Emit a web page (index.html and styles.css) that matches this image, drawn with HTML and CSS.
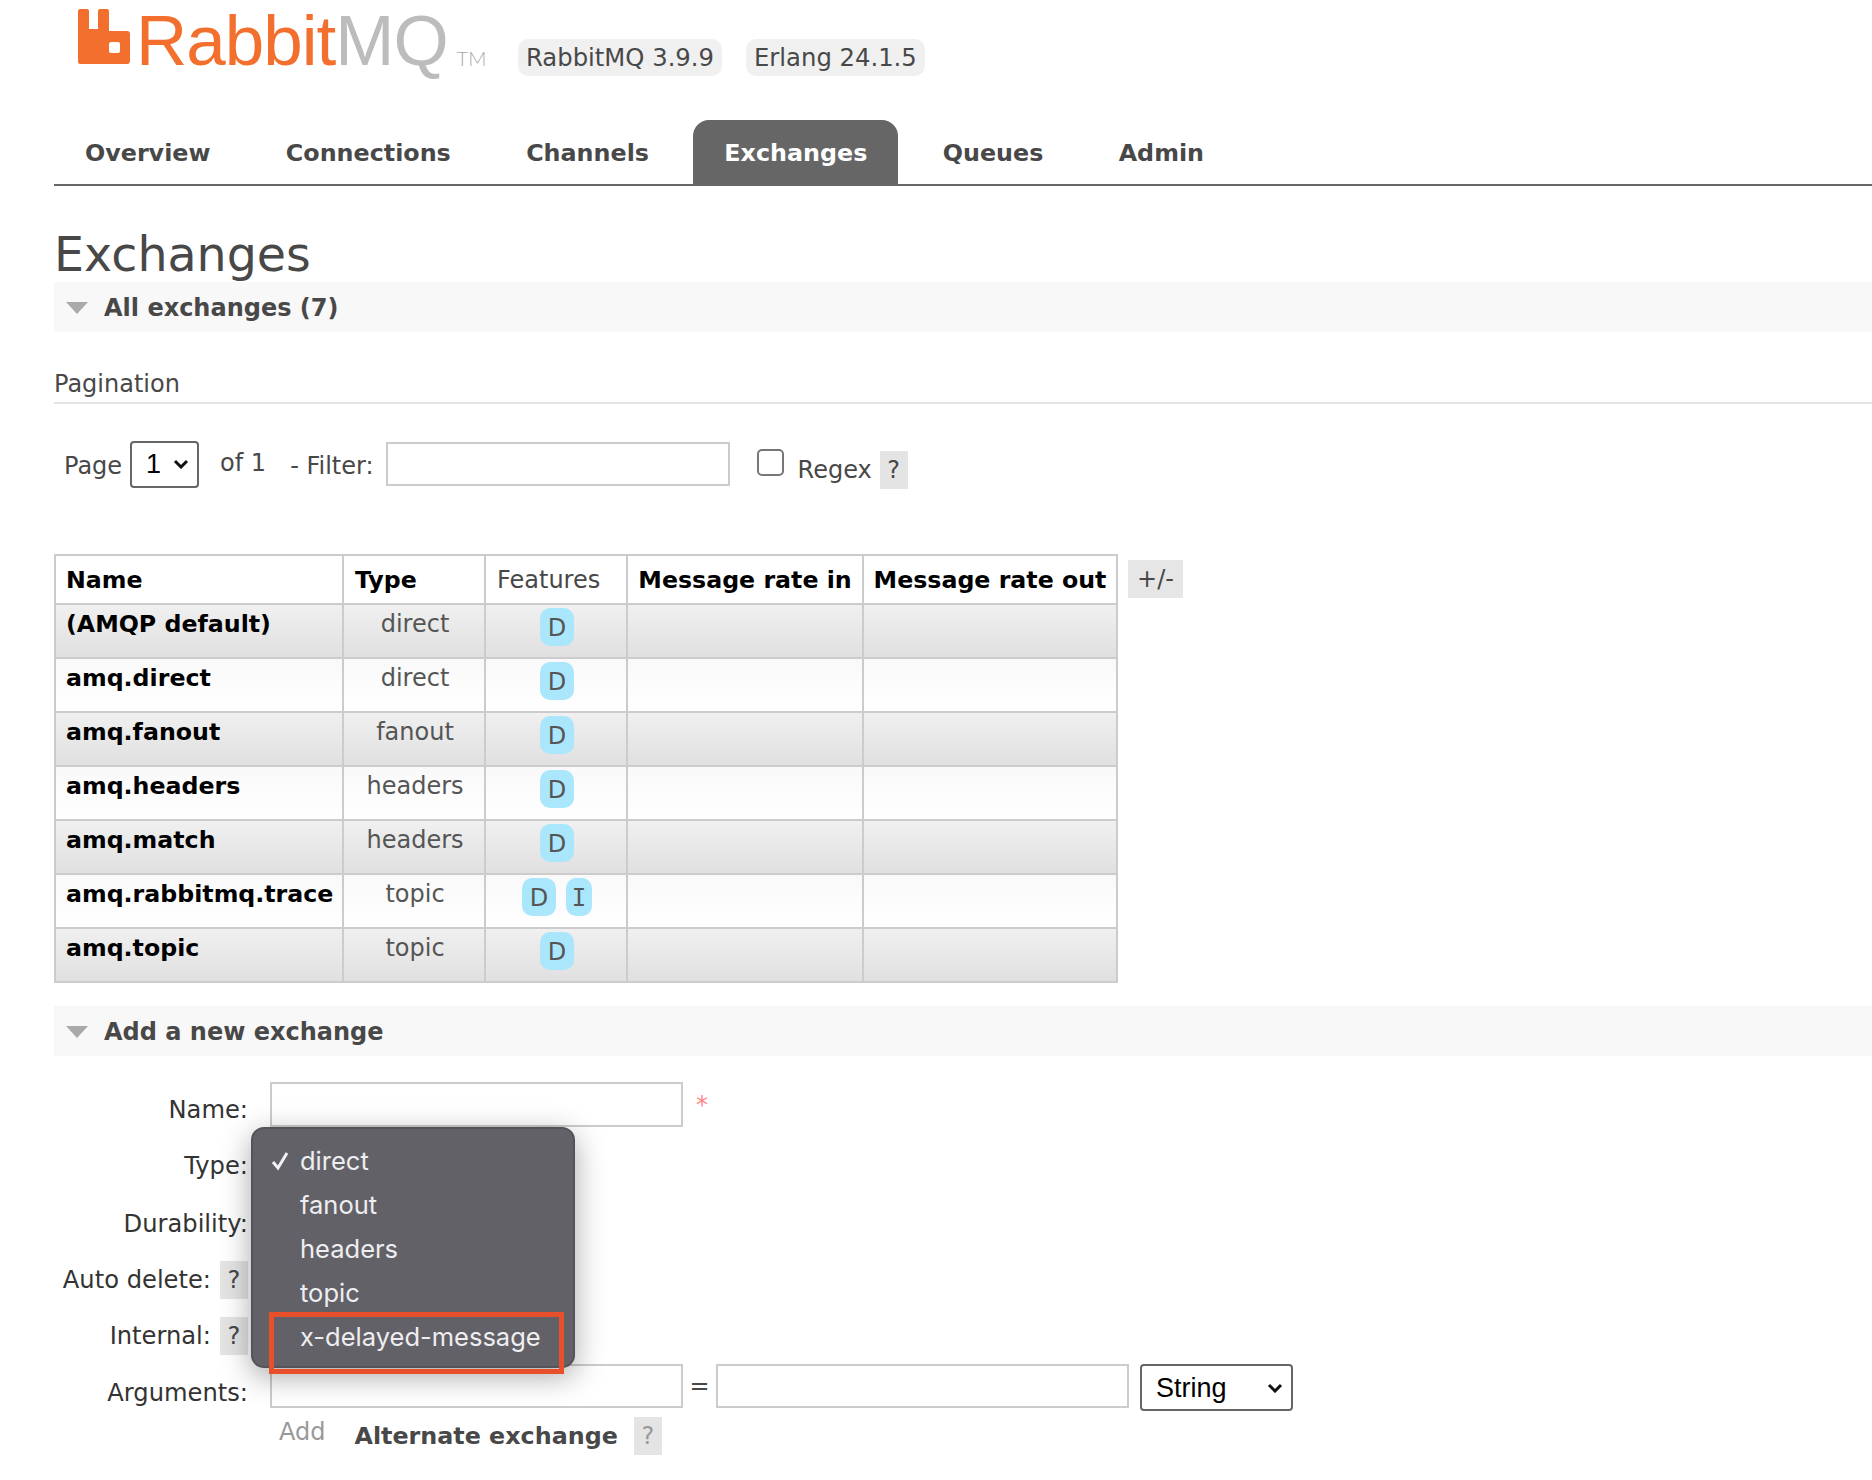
FILE: index.html
```html
<!DOCTYPE html>
<html lang="en">
<head>
    <meta charset="UTF-8">
    <title>RabbitMQ Management</title>
    <link rel="stylesheet" href="styles.css">
</head>
<body>
    <div class="page">
        <div class="header">
            <div class="logo">
                <svg class="logo-icon" width="52" height="55" viewBox="0 0 52 55">
                    <path fill="#f26f2e" fill-rule="evenodd" d="M2 0h7a2 2 0 0 1 2 2v18h9V2a2 2 0 0 1 2-2h7a2 2 0 0 1 2 2v20h18a3 3 0 0 1 3 3v27a3 3 0 0 1-3 3H2a2 2 0 0 1-2-2V2a2 2 0 0 1 2-2zM33 33a2 2 0 0 0-2 2v7a2 2 0 0 0 2 2h7a2 2 0 0 0 2-2v-7a2 2 0 0 0-2-2z"/>
                </svg>
                <span class="logo-text"><span class="logo-rabbit">Rabbit</span>MQ</span>
                <span class="logo-tm">TM</span>
            </div>
            <span class="version">RabbitMQ 3.9.9</span>
            <span class="version">Erlang 24.1.5</span>
        </div>

        <ul class="nav">
            <li>Overview</li>
            <li>Connections</li>
            <li>Channels</li>
            <li class="selected">Exchanges</li>
            <li>Queues</li>
            <li>Admin</li>
        </ul>

        <h1>Exchanges</h1>
        <h2 class="section-title"><span class="arrow"></span>All exchanges (7)</h2>

        <h3 class="sub-title">Pagination</h3>
        <div class="pagination">
            <span class="page-label">Page</span>
            <select class="page-select"><option>1</option></select>
            <span class="of-label">of 1</span>
            <span class="filter-label">- Filter:</span>
            <input type="text" class="filter-input">
            <input type="checkbox" class="regex-check">
            <span class="regex-label">Regex</span>
            <span class="help regex-help">?</span>
        </div>

        <div class="table-wrap">
            <table class="list">
                <thead>
                    <tr>
                        <th class="col-name">Name</th>
                        <th class="col-type">Type</th>
                        <th class="col-features plain">Features</th>
                        <th class="col-in center">Message rate in</th>
                        <th class="col-out center">Message rate out</th>
                    </tr>
                </thead>
                <tbody>
                    <tr class="alt1"><td class="name">(AMQP default)</td><td class="type">direct</td><td class="features"><span class="pill">D</span></td><td></td><td></td></tr>
                    <tr class="alt2"><td class="name">amq.direct</td><td class="type">direct</td><td class="features"><span class="pill">D</span></td><td></td><td></td></tr>
                    <tr class="alt1"><td class="name">amq.fanout</td><td class="type">fanout</td><td class="features"><span class="pill">D</span></td><td></td><td></td></tr>
                    <tr class="alt2"><td class="name">amq.headers</td><td class="type">headers</td><td class="features"><span class="pill">D</span></td><td></td><td></td></tr>
                    <tr class="alt1"><td class="name">amq.match</td><td class="type">headers</td><td class="features"><span class="pill">D</span></td><td></td><td></td></tr>
                    <tr class="alt2"><td class="name">amq.rabbitmq.trace</td><td class="type">topic</td><td class="features"><span class="pill">D</span><span class="pill pill-i">I</span></td><td></td><td></td></tr>
                    <tr class="alt1"><td class="name">amq.topic</td><td class="type">topic</td><td class="features"><span class="pill">D</span></td><td></td><td></td></tr>
                </tbody>
            </table>
            <span class="plus-minus">+/-</span>
        </div>

        <h2 class="section-title add-title"><span class="arrow"></span>Add a new exchange</h2>

        <div class="add-form">
            <div class="form-row row-name">
                <label class="form-label">Name:</label>
                <input type="text" class="form-input">
                <span class="required">*</span>
            </div>
            <div class="form-row row-type">
                <label class="form-label">Type:</label>
            </div>
            <div class="form-row row-durability">
                <label class="form-label">Durability:</label>
            </div>
            <div class="form-row row-auto">
                <label class="form-label">Auto delete:<span class="help">?</span></label>
            </div>
            <div class="form-row row-internal">
                <label class="form-label">Internal:<span class="help">?</span></label>
            </div>
            <div class="form-row row-args">
                <label class="form-label">Arguments:</label>
                <input type="text" class="form-input">
                <span class="equals">=</span>
                <input type="text" class="form-input">
                <select class="arg-type"><option>String</option></select>
            </div>
            <div class="form-row row-add">
                <span class="add-link">Add</span>
                <span class="alternate">Alternate exchange</span>
                <span class="help help-dim">?</span>
            </div>

            <div class="type-menu">
                <div class="menu-item">
                    <svg class="menu-check" width="18" height="20" viewBox="0 0 18 20"><path d="M2 11l5 6L16 2" fill="none" stroke="#f2f2f4" stroke-width="3"/></svg>
                    direct
                </div>
                <div class="menu-item">fanout</div>
                <div class="menu-item">headers</div>
                <div class="menu-item">topic</div>
                <div class="menu-item">x-delayed-message</div>
                <div class="menu-mark"></div>
            </div>
        </div>
    </div>
</body>
</html>
```

FILE: styles.css
```css
/* Global Styles */
body {
    margin: 0;
    background: #fff;
    color: #484848;
    font-family: "DejaVu Sans", Verdana, sans-serif;
    font-size: 24px;
}

.page {
    padding-left: 54px;
    overflow: hidden;
}

/* Header */
.header {
    height: 120px;
    display: flex;
    align-items: flex-start;
}

.logo {
    width: 464px;
    height: 80px;
    padding-left: 24px;
    display: flex;
    align-items: flex-start;
    box-sizing: border-box;
}

.logo-icon {
    margin-top: 9px;
    flex-shrink: 0;
}

.logo-text {
    margin-left: 6px;
    font-family: "Liberation Sans", Arial, sans-serif;
    font-size: 71px;
    letter-spacing: -1px;
    color: #bcbcbc;
    white-space: nowrap;
}

.logo-rabbit {
    color: #f26f2e;
}

.logo-tm {
    margin: 46px 0 0 9px;
    font-family: Lato, "Open Sans", sans-serif;
    font-size: 20px;
    font-weight: 300;
    color: #aaa;
}

.version {
    margin: 39px 24px 0 0;
    padding: 0 8px;
    height: 37px;
    line-height: 37px;
    font-size: 24.3px;
    background: #f0f0f0;
    border-radius: 10px;
    white-space: nowrap;
}

/* Nav */
.nav {
    list-style: none;
    margin: 0;
    padding: 0;
    height: 64px;
    display: flex;
    gap: 13.4px;
    border-bottom: 2px solid #666;
}

.nav li {
    padding: 0 31px;
    line-height: 67px;
    font-size: 23.8px;
    font-weight: bold;
}

.nav li.selected {
    background: #666;
    color: #fff;
    border-radius: 16px 16px 0 0;
    height: 66px;
}

h1 {
    margin: 41px 0 0;
    font-size: 47.5px;
    font-weight: normal;
    line-height: 55px;
}

/* Section bars */
.section-title {
    margin: 0;
    height: 50px;
    line-height: 50px;
    background: #f8f8f8;
    font-size: 24px;
    font-weight: bold;
    display: flex;
    align-items: center;
    white-space: nowrap;
    padding-top: 1px;
    box-sizing: border-box;
}

.arrow {
    width: 0;
    height: 0;
    margin: 0 16px 0 12px;
    border-left: 11px solid transparent;
    border-right: 11px solid transparent;
    border-top: 12px solid #aaa;
}

.sub-title {
    margin: 32px 0 0;
    height: 38px;
    line-height: 40px;
    font-size: 24px;
    font-weight: normal;
    border-bottom: 2px solid #e4e4e4;
}

/* Pagination */
.pagination {
    margin: 36px 0 0 10px;
    height: 48px;
    display: flex;
    align-items: center;
    line-height: 30px;
}

select {
    appearance: none;
    font-family: "Liberation Sans", Arial, sans-serif;
    color: #000;
    background-color: #fff;
    background-image: url("data:image/svg+xml,%3Csvg xmlns='http://www.w3.org/2000/svg' width='16' height='10' viewBox='0 0 16 10'%3E%3Cpath d='M2 2l6 6 6-6' fill='none' stroke='%23111' stroke-width='3'/%3E%3C/svg%3E");
    background-repeat: no-repeat;
    background-position: right 8px center;
    border: 2px solid #666;
    border-radius: 4px;
}

.page-select {
    margin-left: 8px;
    width: 69px;
    height: 47px;
    font-size: 27px;
    padding-left: 14px;
}

.page-label {
    margin-top: 4px;
}

.of-label {
    margin: -2px 0 0 21px;
}

.filter-label {
    margin: 4px 0 0 24px;
}

input {
    box-sizing: border-box;
    border: 2px solid #ccc;
    background: #fff;
    border-radius: 0;
    margin: 0;
}

.filter-input {
    margin-left: 12px;
    width: 344px;
    height: 44px;
}

.regex-check {
    appearance: none;
    margin: -4px 0 0 27px;
    width: 27px;
    height: 27px;
    border: 2px solid #777;
    border-radius: 5px;
}

.regex-label {
    margin: 12px 0 0 14px;
}

.help {
    display: inline-block;
    width: 28px;
    height: 38px;
    line-height: 38px;
    text-align: center;
    background: #e4e4e4;
    color: #484848;
}

.regex-help {
    margin: 12px 0 0 8px;
}

/* Exchange table */
.table-wrap {
    margin-top: 66px;
    display: flex;
    align-items: flex-start;
}

.list {
    border-collapse: collapse;
    table-layout: fixed;
    width: 1062px;
}

.list th,
.list td {
    border: 2px solid #ccc;
    padding: 0;
    box-sizing: border-box;
}

.list th {
    height: 49px;
    padding: 0 0 0 10px;
    font-size: 23.7px;
    color: #000;
    text-align: left;
    white-space: nowrap;
}

.list th.col-type {
    padding-left: 11px;
}

.list th.plain {
    padding-left: 11px;
    font-weight: normal;
    font-size: 24px;
    color: #484848;
}

.list th.center {
    text-align: center;
    padding-left: 0;
}

.col-name { width: 288px; }
.col-type { width: 142px; }
.col-features { width: 142px; }
.col-in { width: 236px; }
.col-out { width: 254px; }

.list td {
    height: 54px;
    vertical-align: top;
}

.alt1 td {
    background: linear-gradient(#f0f0f0, #e0e0e0);
}

.alt2 td {
    background: linear-gradient(#f9f9f9, #fff);
}

.name {
    padding: 5px 0 0 10px !important;
    font-size: 23.7px;
    color: #000;
    font-weight: bold;
    white-space: nowrap;
}

.type {
    padding: 5px 0 0 2px !important;
    text-align: center;
    color: #555;
}

.features {
    padding: 3px 0 0 2px !important;
    text-align: center;
}

.pill {
    display: inline-block;
    width: 34px;
    height: 38px;
    line-height: 40px;
    border-radius: 10px;
    background: #abe7fc;
    color: #555;
    text-align: center;
    margin: 0;
}

.pill-i {
    margin-left: 10px;
    font-family: "DejaVu Sans Mono", monospace;
    width: 26px;
}

.plus-minus {
    margin: 6px 0 0 10px;
    width: 55px;
    height: 38px;
    line-height: 38px;
    text-align: center;
    background: #e6e6e6;
}

/* Add form */
.add-title {
    margin-top: 23px;
}

.add-form {
    position: relative;
    margin-top: 26px;
}

.form-row {
    display: flex;
    align-items: flex-start;
}

.form-label {
    width: 194px;
    margin-right: 22px;
    flex-shrink: 0;
    text-align: right;
    font-size: 24.2px;
    color: #333;
    line-height: 38px;
    padding-top: 9px;
    box-sizing: border-box;
}

.form-label .help {
    margin-left: 9px;
}

.form-input {
    width: 413px;
    height: 44px;
}

.row-name .form-input { height: 45px; }

.row-name { height: 60px; }
.row-type { height: 59px; }
.row-durability { height: 56px; }
.row-auto { height: 56px; }
.row-internal { height: 51px; }
.row-args { height: 52px; }

.row-type .form-label { padding-top: 5px; }
.row-durability .form-label { padding-top: 4px; }
.row-auto .form-label { padding-top: 4px; }
.row-internal .form-label { padding-top: 4px; }
.row-args .form-label { padding-top: 10px; }

.required {
    margin: 9px 0 0 13px;
    color: #f88;
}

.equals {
    width: 33px;
    text-align: center;
    line-height: 44px;
    color: #484848;
}

.arg-type {
    margin-left: 11px;
    width: 153px;
    height: 47px;
    font-size: 27px;
    padding-left: 14px;
}

.row-add {
    align-items: center;
    height: 38px;
    padding-top: 1px;
}

.add-link {
    margin-left: 225px;
    margin-top: -8px;
    color: #999;
}

.alternate {
    margin-left: 29px;
    font-size: 23.8px;
    font-weight: bold;
}

.help-dim {
    margin-left: 16px;
    color: #999;
}

/* Open dropdown for the type select */
.type-menu {
    position: absolute;
    left: 197px;
    top: 45px;
    width: 324px;
    height: 241px;
    box-sizing: border-box;
    padding-top: 10px;
    background: #636168;
    border: 2px solid #55535a;
    border-radius: 13px;
    box-shadow: 0 8px 30px rgba(0, 0, 0, 0.35);
    font-family: Inter, "Open Sans", sans-serif;
    font-size: 25.5px;
    color: #eeeef0;
}

.menu-item {
    position: relative;
    height: 44px;
    line-height: 44px;
    padding-left: 47px;
}

.menu-check {
    position: absolute;
    left: 18px;
    top: 12px;
}

.menu-mark {
    position: absolute;
    left: 16px;
    top: 183px;
    width: 295px;
    height: 62px;
    box-sizing: border-box;
    border: 5px solid #e8502c;
}
```
